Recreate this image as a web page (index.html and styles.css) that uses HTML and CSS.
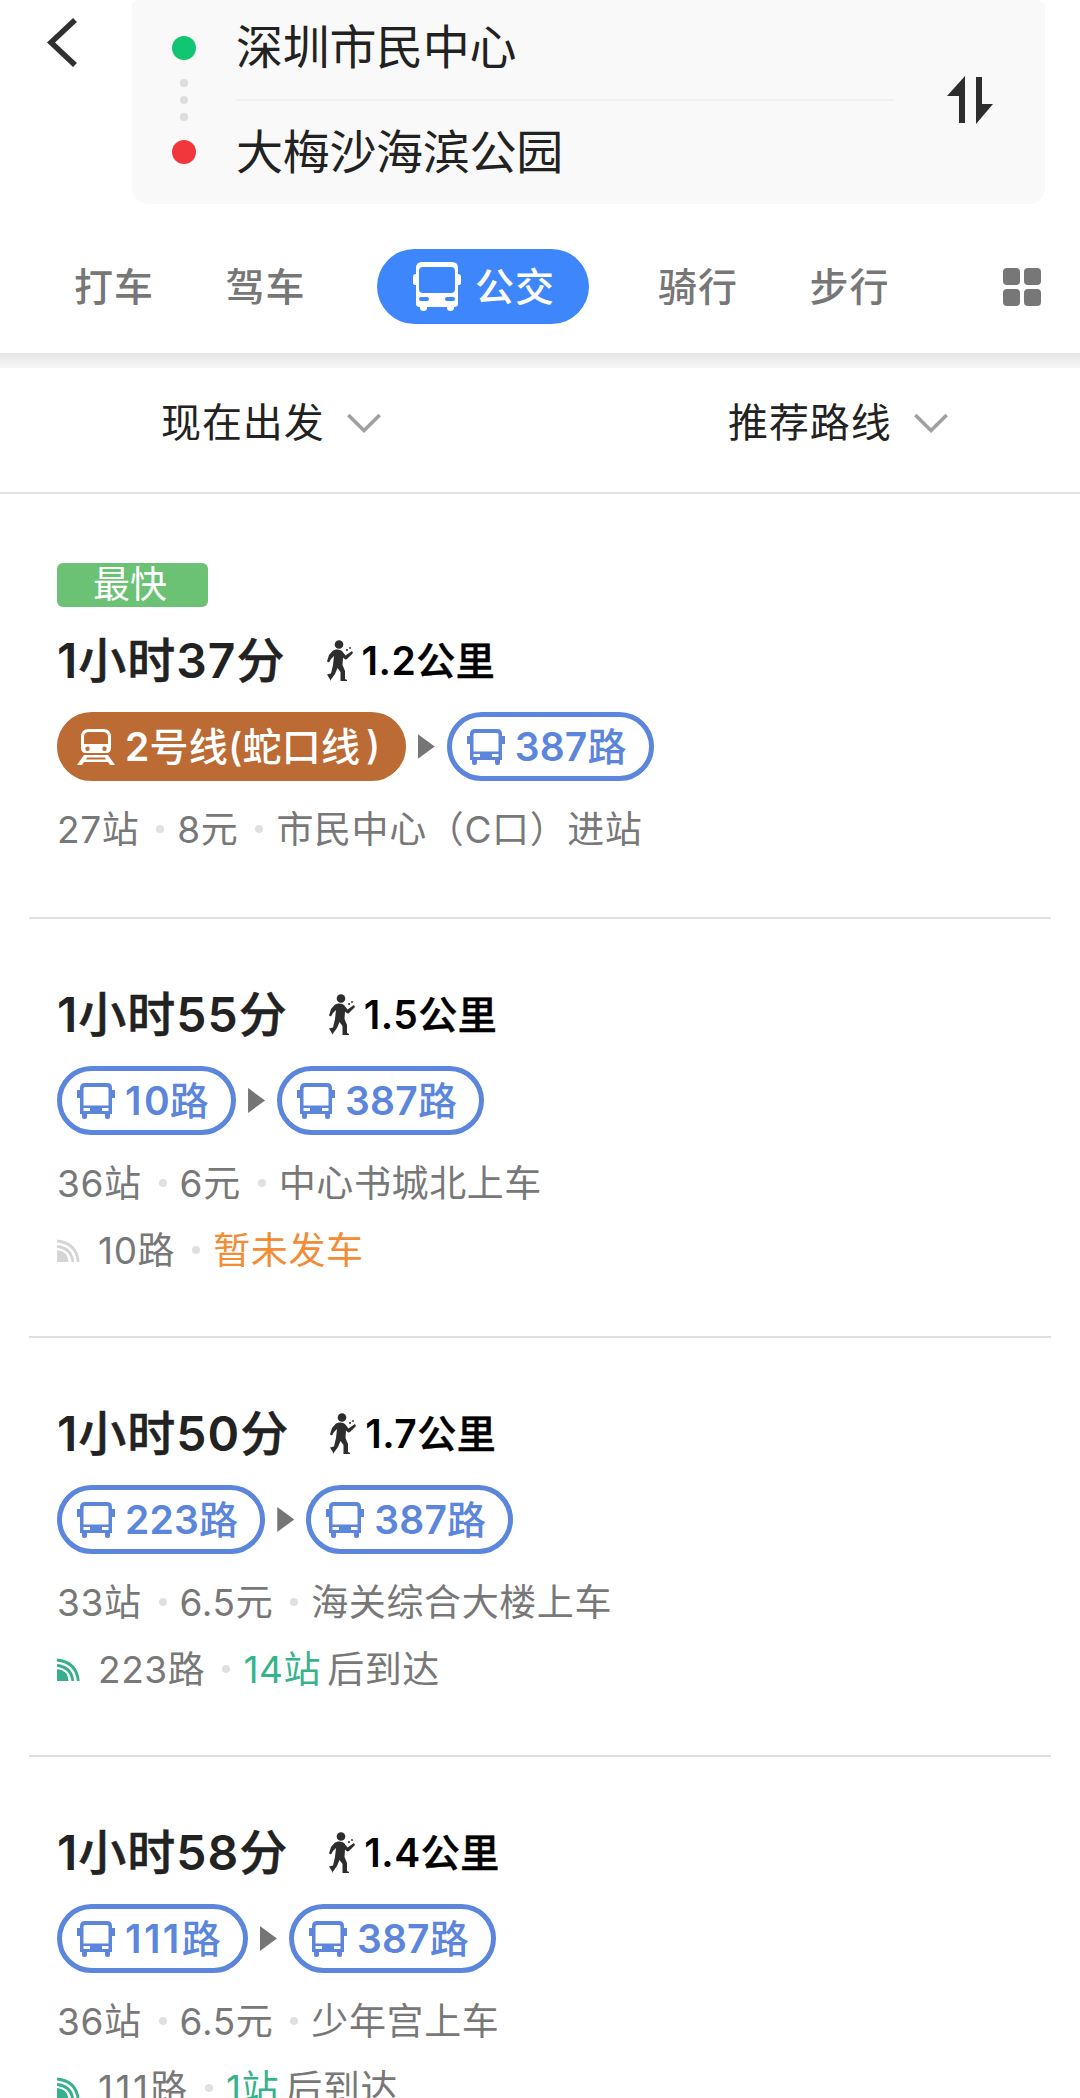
FILE: index.html
```html
<!DOCTYPE html>
<html lang="zh-CN">
<head>
<meta charset="utf-8">
<title>公交路线</title>
<link rel="stylesheet" href="styles.css">
</head>
<body>
<svg class="defs" width="0" height="0">
  <symbol id="bus" viewBox="0 0 38 36">
    <path fill="currentColor" fill-rule="evenodd" d="M8 0H30Q35 0 35 5V7H38V15H35V31H33V34Q33 36 31 36H30Q28 36 28 34V31H10V34Q10 36 8 36H7Q5 36 5 34V31H3V15H0V7H3V5Q3 0 8 0ZM8 4Q6.500 4 6.500 6V22.500H31.500V6Q31.500 4 30 4ZM6.500 25V28H13V25ZM25 25V28H31.500V25Z"/>
  </symbol>
  <symbol id="bus-big" viewBox="0 0 48 49">
    <path fill="currentColor" fill-rule="evenodd" d="M9 0H39Q45 0 45 6V12Q48 12 48 15V21Q48 23 45 23V42Q45 45 41 45V46Q41 49 37.500 49Q34 49 34 46V45H14V46Q14 49 10.500 49Q7 49 7 46V45Q3 45 3 42V23Q0 23 0 21V15Q0 12 3 12V6Q3 0 9 0ZM10 5Q6 5 6 9V27Q6 31 10 31H38Q42 31 42 27V9Q42 5 38 5ZM8 35Q6 35 6 37T8 39H14Q16 39 16 37T14 35ZM34 35Q32 35 32 37T34 39H40Q42 39 42 37T40 35Z"/>
  </symbol>
  <symbol id="train" viewBox="0 0 38 36">
    <path fill="currentColor" fill-rule="evenodd" d="M12 0H26Q34 0 34 8V19Q34 24 29 24H9Q4 24 4 19V8Q4 0 12 0ZM12 3Q7 3 7 8V15H31V8Q31 3 26 3ZM10.500 17.500A2.200 2.200 0 1 0 10.500 21.900A2.200 2.200 0 1 0 10.500 17.500ZM27.500 17.500A2.200 2.200 0 1 0 27.500 21.900A2.200 2.200 0 1 0 27.500 17.500ZM7 26H31L38 36H33L31 33H7L5 36H0ZM10 28.500L9 30.500H29L28 28.500Z"/>
  </symbol>
  <symbol id="walk" viewBox="0 0 26 41">
    <g fill="#2d2d2d"><circle cx="12" cy="4.500" r="4.300"/><path d="M9 9.500Q13 9 15 11L18.500 15.500L25 11L26 13L20 19Q18.500 20 17 18.500L16 17.500L15.500 25L18 31V39L20 40V41H13.500L13.500 32L10.500 28L8 34L4 39.500V41L0 34.500L4 33.500L6 25L7 16L4 19L2 22.500L0 21.500L2 15L6 10.500Z"/><circle cx="20" cy="10" r="1"/><circle cx="23" cy="8" r=".9"/></g>
  </symbol>
  <symbol id="signal" viewBox="0 0 23 23">
    <path fill="currentColor" d="M0 11Q11 12 11.500 23H0Z"/>
    <g fill="none" stroke="currentColor" stroke-width="2.800"><path d="M0 7.500Q14.500 9 15.800 23M0 2Q19.500 4 21.300 23"/></g>
  </symbol>
  <symbol id="chevron" viewBox="0 0 34 20">
    <path fill="none" stroke="#a0a0a0" stroke-width="3.600" d="M1.300 2L17 17.500L32.700 2"/>
  </symbol>
</svg>

<header class="top">
  <div class="search">
    <svg class="back" viewBox="0 0 30 50"><path d="M28 3L4 25.500L28 48"/></svg>
    <div class="trip">
      <div class="marks">
        <i class="pin from"></i>
        <span class="steps"><i></i><i></i><i></i></span>
        <i class="pin to"></i>
      </div>
      <div class="places">
        <div class="place">深圳市民中心</div>
        <div class="place second">大梅沙海滨公园</div>
      </div>
      <svg class="swap" viewBox="0 0 46 48"><path d="M18 0V47H12V20H0ZM29 1H35V28H46L29 48Z"/></svg>
    </div>
  </div>
  <nav class="tabs">
    <span class="tab">打车</span>
    <span class="tab">驾车</span>
    <span class="tab active"><svg><use href="#bus-big"/></svg>公交</span>
    <span class="tab">骑行</span>
    <span class="tab">步行</span>
    <span class="more"><i></i><i></i><i></i><i></i></span>
  </nav>
</header>
<div class="shade"></div>

<div class="filters">
  <div class="filter">现在出发<svg><use href="#chevron"/></svg></div>
  <div class="filter right">推荐路线<svg><use href="#chevron"/></svg></div>
</div>

<main>
  <section class="route first">
    <div class="badge">最快</div>
    <div class="head"><span class="time">1<b>小时</b>37<b>分</b></span><svg class="walk"><use href="#walk"/></svg><span class="dist">1.2<b>公里</b></span></div>
    <div class="lines"><span class="chip metro"><svg><use href="#train"/></svg><span>2<b>号线(蛇口线</b></span><b class="close">)</b></span><i class="arrow"></i><span class="chip"><svg><use href="#bus"/></svg><span>387<b>路</b></span></span></div>
    <div class="info"><span>27站</span><i class="dot"></i><span>8元</span><i class="dot"></i><span>市民中心（C口）进站</span></div>
  </section>

  <section class="route">
    <div class="head"><span class="time">1<b>小时</b>55<b>分</b></span><svg class="walk"><use href="#walk"/></svg><span class="dist">1.5<b>公里</b></span></div>
    <div class="lines"><span class="chip"><svg><use href="#bus"/></svg><span><span class="ones">1</span>0<b>路</b></span></span><i class="arrow"></i><span class="chip"><svg><use href="#bus"/></svg><span>387<b>路</b></span></span></div>
    <div class="info"><span>36站</span><i class="dot"></i><span>6元</span><i class="dot"></i><span>中心书城北上车</span></div>
    <div class="info live"><svg class="signal idle"><use href="#signal"/></svg><span>10路</span><i class="dot"></i><span class="wait">暂未发车</span></div>
  </section>

  <section class="route">
    <div class="head"><span class="time">1<b>小时</b>50<b>分</b></span><svg class="walk"><use href="#walk"/></svg><span class="dist">1.7<b>公里</b></span></div>
    <div class="lines"><span class="chip"><svg><use href="#bus"/></svg><span>223<b>路</b></span></span><i class="arrow"></i><span class="chip"><svg><use href="#bus"/></svg><span>387<b>路</b></span></span></div>
    <div class="info"><span>33站</span><i class="dot"></i><span>6.5元</span><i class="dot"></i><span>海关综合大楼上车</span></div>
    <div class="info live"><svg class="signal"><use href="#signal"/></svg><span>223路</span><i class="dot"></i><span class="stops">14站</span><span>后到达</span></div>
  </section>

  <section class="route">
    <div class="head"><span class="time">1<b>小时</b>58<b>分</b></span><svg class="walk"><use href="#walk"/></svg><span class="dist">1.4<b>公里</b></span></div>
    <div class="lines"><span class="chip"><svg><use href="#bus"/></svg><span><span class="ones">111</span><b>路</b></span></span><i class="arrow"></i><span class="chip"><svg><use href="#bus"/></svg><span>387<b>路</b></span></span></div>
    <div class="info"><span>36站</span><i class="dot"></i><span>6.5元</span><i class="dot"></i><span>少年宫上车</span></div>
    <div class="info live"><svg class="signal"><use href="#signal"/></svg><span><span class="ones">111</span>路</span><i class="dot"></i><span class="stops">1站</span><span>后到达</span></div>
  </section>
</main>
</body>
</html>
```
FILE: styles.css
```css
* { box-sizing: border-box; }
html { overflow: hidden; height: 2098px; }
body {
  margin: 0;
  width: 1080px;
  height: 2098px;
  overflow: hidden;
  background: #fff;
  color: #222;
  font-family: Inter, "Noto Sans CJK SC", sans-serif;
}
i { display: block; flex: none; }
b { font-weight: 500; }
svg { flex: none; display: block; }
.defs { position: absolute; }

.top { height: 353px; }
.search { display: flex; height: 204px; }
.back { width: 30px; height: 50px; margin: 17px 55px 0 47px; }
.back path { fill: none; stroke: #303030; stroke-width: 5.6; }
.trip {
  display: flex;
  width: 913px;
  height: 204px;
  background: #f9f9f9;
  border-radius: 6px 8px 16px 16px;
}
.marks { display: flex; flex-direction: column; align-items: center; width: 24px; margin: 36px 0 0 40px; }
.pin { width: 24px; height: 24px; border-radius: 50%; }
.from { background: #10c670; }
.to { background: #f1373c; }
.steps { display: flex; flex-direction: column; justify-content: center; gap: 9px; height: 80px; }
.steps i { width: 8px; height: 8px; border-radius: 50%; background: #ddd; }
.places { width: 658px; margin-left: 40px; }
.place { height: 99px; line-height: 94px; font-size: 47px; letter-spacing: -.3px; white-space: nowrap; }
.second { border-top: 2px solid #f1f1f1; line-height: 101px; }
.swap { width: 46px; height: 48px; margin: 76px 0 0 53px; fill: #2d2d2d; }

.tabs { display: flex; align-items: center; height: 75px; margin-top: 45px; padding-left: 74px; }
.tab { width: 80px; margin-right: 71.5px; font-size: 39px; letter-spacing: 1px; line-height: 75px; color: #777; font-weight: 500; white-space: nowrap; }
.active {
  display: flex;
  align-items: center;
  gap: 14px;
  width: 212px;
  height: 75px;
  margin-right: 69px;
  padding-left: 36px;
  border-radius: 38px;
  background: #3e86fc;
  color: #fff;
}
.active svg { width: 48px; height: 49px; }
.more { display: grid; grid-template-columns: 17px 17px; gap: 4px; margin-left: 42px; }
.more i { width: 17px; height: 17px; border-radius: 4px; background: #777; }
.shade { height: 15px; background: linear-gradient(#e5e5e5, #f7f7f7); }

.filters { display: flex; height: 126px; border-bottom: 2px solid #e2e2e2; }
.filter { display: flex; flex: none; align-items: center; width: 567px; padding-left: 161px; font-size: 40px; letter-spacing: .9px; line-height: 109px; height: 109px; }
.right { width: 513px; }
.filter svg { width: 34px; height: 20px; margin-left: 22px; }

.route { height: 419px; margin: 0 29px; padding: 67px 28px 0; border-bottom: 2px solid #e0e0e0; }
.first { height: 425px; padding-top: 69px; }
.badge {
  width: 151px;
  height: 44px;
  margin-bottom: 26px;
  padding-right: 5px;
  border-radius: 6px;
  background: #6bc174;
  color: #fff;
  font-size: 37px;
  line-height: 44px;
  text-align: center;
}
.head { display: flex; align-items: center; height: 56px; white-space: nowrap; }
.first .head { margin-top: -1px; }
.time { padding-bottom: 7px; font-size: 48px; font-weight: 600; letter-spacing: 1px; }
.time b, .dist b { -webkit-text-stroke: .5px currentColor; }
.walk { width: 26px; height: 41px; margin-left: 41px; }
.dist { padding-bottom: 5px; margin-left: 9px; font-size: 39px; font-weight: 600; letter-spacing: .5px; color: #000; }
.lines { display: flex; align-items: center; gap: 12px; height: 69px; margin-top: 24px; }
.chip {
  display: flex;
  align-items: center;
  height: 69px;
  padding: 0 22px 5px 15px;
  border: 5px solid #5b86dc;
  border-radius: 35px;
  color: #5b86dc;
  font-size: 39px;
  font-weight: 600;
  letter-spacing: .2px;
  white-space: nowrap;
}
.chip svg { width: 38px; height: 36px; margin: 5px 10px 0 0; }
.metro { padding-right: 20px; background: #bd6b34; border-color: #bd6b34; color: #fff; }
.close { margin-left: 6px; }
.ones { letter-spacing: 2.4px; }
.arrow { width: 17px; height: 25px; background: #757575; clip-path: polygon(0 0, 100% 50%, 0 100%); }
.info { display: flex; align-items: center; height: 60px; margin-top: 18px; font-size: 37px; letter-spacing: .6px; color: #787878; white-space: nowrap; }
.info > span { padding-bottom: 4px; }
.dot { width: 8px; height: 8px; margin: 0 13px 0 17px; border-radius: 50%; background: #e0e0e0; }
.live { margin-top: 7px; }
.signal { width: 23px; height: 23px; margin-right: 18px; color: #35b08a; }
.idle { color: #d5d5d5; }
.wait { color: #f28c35; }
.stops { color: #36b38c; margin-right: 6px; }
```
